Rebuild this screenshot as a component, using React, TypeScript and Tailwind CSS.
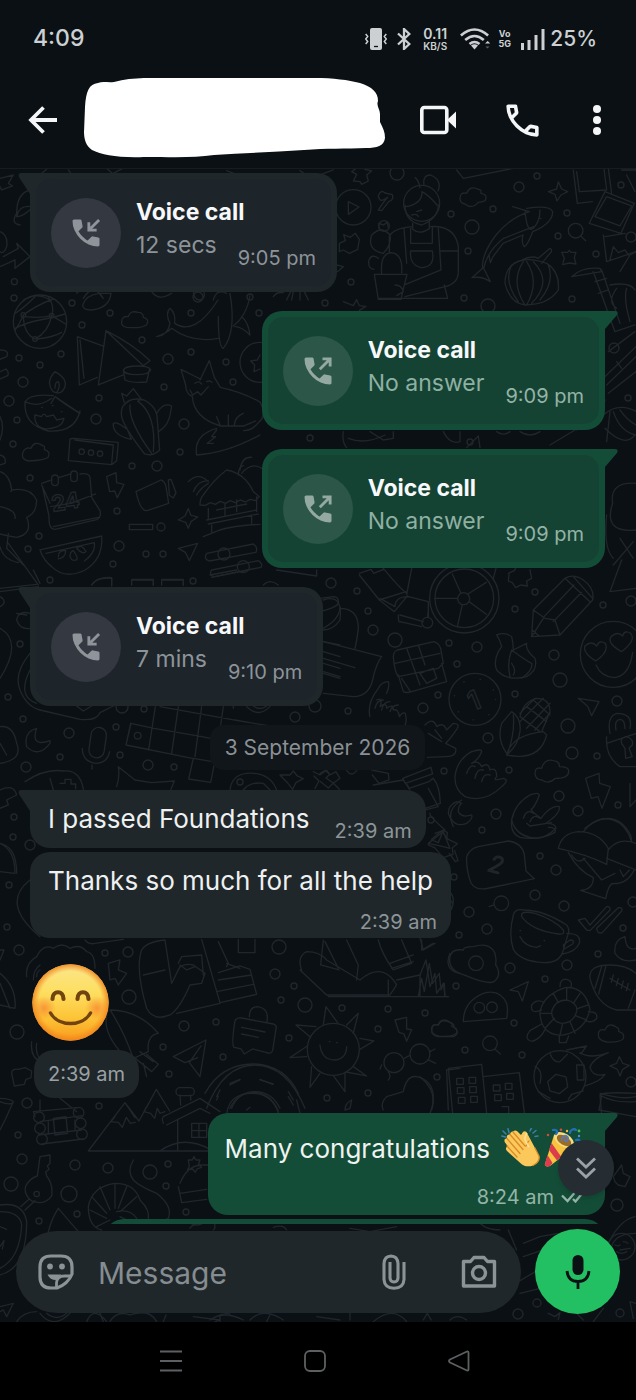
import type { ReactNode } from 'react';

type Dot = [number, number, number];

const DOTS: Dot[] = [
  [72, 303, 3], [110, 313, 3], [82, 325, 3], [142, 340, 3], [19, 358, 3], [61, 354, 3], [40, 365, 3], [23, 382, 5],
  [9, 401, 5], [168, 359, 5], [191, 352, 3], [226, 362, 3], [233, 382, 3], [164, 387, 3], [99, 398, 3], [96, 419, 5],
  [17, 420, 3], [184, 424, 5], [13, 444, 3], [132, 466, 3], [157, 466, 5], [180, 452, 3], [30, 478, 3], [117, 511, 3],
  [161, 527, 4], [39, 536, 3], [28, 549, 3], [119, 546, 5], [146, 554, 3], [163, 554, 3], [113, 564, 3], [50, 580, 3],
  [198, 297, 5], [191, 313, 3], [259, 313, 3], [519, 187, 5], [537, 176, 3], [493, 209, 3], [451, 214, 3], [472, 227, 7],
  [567, 213, 3], [621, 185, 3], [558, 236, 3], [596, 254, 3], [468, 251, 3], [351, 282, 3], [464, 298, 3], [488, 306, 7],
  [572, 299, 3], [397, 173, 7], [614, 348, 5], [628, 398, 3], [631, 237, 5], [325, 303, 3], [331, 583, 5], [357, 591, 3],
  [368, 611, 3], [373, 630, 5], [395, 640, 7], [449, 643, 3], [477, 647, 5], [457, 664, 3], [515, 609, 3], [535, 592, 3],
  [554, 655, 5], [560, 680, 7], [603, 605, 3], [631, 601, 5], [438, 695, 3], [423, 708, 5], [515, 694, 3], [488, 738, 5],
  [568, 726, 7], [572, 753, 6], [597, 756, 3], [617, 701, 5], [444, 771, 3], [509, 770, 3], [559, 796, 5], [578, 811, 5],
  [618, 805, 3], [496, 814, 5], [431, 820, 3], [482, 830, 3], [348, 711, 3], [193, 581, 3], [20, 644, 3], [8, 697, 3],
  [23, 719, 3], [69, 733, 5], [116, 727, 3], [60, 757, 3], [26, 767, 5], [120, 755, 3], [148, 765, 5], [174, 767, 3],
  [144, 709, 3], [122, 707, 6], [295, 717, 5], [315, 706, 6], [14, 817, 3], [13, 837, 3], [30, 845, 5], [240, 782, 3],
  [9, 885, 3], [7, 927, 3], [19, 950, 5], [105, 953, 3], [128, 952, 5], [129, 997, 7], [279, 947, 7], [275, 974, 5],
  [294, 986, 3], [281, 1000, 3], [305, 1005, 7], [342, 1008, 3], [388, 1009, 3], [425, 1013, 3], [378, 1029, 3],
  [289, 1038, 3], [184, 1026, 5], [216, 1022, 3], [163, 1047, 3], [223, 1057, 3], [169, 1074, 3], [17, 1032, 7],
  [327, 1098, 3], [368, 1093, 3], [437, 1077, 3], [540, 856, 3], [556, 870, 5], [454, 877, 3], [535, 895, 5],
  [564, 906, 5], [469, 912, 5], [487, 929, 5], [459, 935, 3], [623, 928, 3], [598, 954, 3], [567, 965, 5], [510, 968, 5],
  [545, 979, 3], [456, 986, 3], [514, 1023, 3], [465, 1050, 3], [522, 1055, 3], [631, 1082, 5], [633, 902, 5],
  [27, 1103, 5], [99, 1106, 3], [18, 1135, 3], [22, 1159, 5], [11, 1184, 7], [75, 1165, 5], [108, 1168, 5], [69, 1194, 8],
  [77, 1214, 3], [39, 1221, 3], [150, 1172, 7], [168, 1164, 3], [166, 1186, 3], [186, 1212, 3], [617, 1205, 6],
  [518, 1314, 5], [537, 1303, 4], [620, 1313, 4], [14, 298, 3], [250, 297, 3], [470, 442, 3], [310, 438, 3],
];

function Wallpaper() {
  return (
    <svg
      aria-hidden="true"
      className="pointer-events-none absolute inset-0 h-full w-full"
      viewBox="0 169 636 1153"
      preserveAspectRatio="xMidYMin slice"
      fill="none"
      stroke="#20262b"
      strokeWidth="1.4"
      strokeLinecap="round"
      strokeLinejoin="round"
    >
      {DOTS.map(([x, y, r]) => (
        <circle key={`${x}-${y}`} cx={x} cy={y} r={r} />
      ))}

      {/* left edge beside the first call */}
      <g transform="translate(0 0) scale(.3333)" strokeWidth="4">
        <path d="M0 535 40 525 25 550 38 558 5 570 0 560M50 640q0-60 40-70M50 640q-20 30 10 35M95 620q-40-5-45 30 20 0 45-25M0 695q25 10 20 45-10 25-20 15M10 770l45-25-5-15 40 40-45 35v-25l-45 20M125 520l15-12M205 510l10 14M320 505l20 18M340 520l30-16M680 512l25 10M900 512l15 10M960 525l40-15" />
        <circle cx="43" cy="845" r="9" />
        <path d="M70 900q40-25 80 0M230 880l20-18M250 895q30-50 60 0M290 870l15 20M455 875q20 30 60 5M580 870q0 30 20 30 20-5 10-30M640 900q10-35 40-20M860 900l12-25M875 900l5-25M900 900v-25M925 900l-12-25M820 890q10-15 30-12" />
      </g>

      {/* globe, samosas, lamp, cactus, fox, calendar, hut */}
      <g transform="translate(0 290) scale(.3333)" strokeWidth="4">
        <circle cx="120" cy="95" r="80" />
        <path d="M45 70Q70 55 105 20M70 75q40-30 90-48M70 75q0 55 35 72M155 77q-10 50-50 70M155 77q10-30-10-55M45 120q12-15 25-45M75 80q50 5 80-3M110 147q50-5 75-20M45 115q40-20 75-25t75-18M155 77l42 25" />
        <circle cx="70" cy="75" r="7" /><circle cx="155" cy="77" r="7" /><circle cx="105" cy="147" r="7" />
        <path d="M248 45q10-30 50-35h35q-5 45-60 50-25 0-25-15ZM365 95q0-18 20-15 5-20 30-13 15 0 15 15 20 5 10 22-15 12-60 8-18-3-15-17ZM470 140q35-5 40-40-15-30 0-45 18 15 14 45 60 40 130-70M470 140q30-10 45-25 60 45 140 30M655 80q0 90 15 95 40-50 20-165M700 108q40-30 50-90M705 110q20 0 45 25-5-40-25-55" />
        <path d="M232 140 238 285 292 262M232 140l76 28M240 150l12 115M318 122 295 285 370 255M318 122q80 40 132 90l-20 15-112-105M370 240q5-12 42-12t40 12q-5 14-42 14t-40-14l5 30q20 10 65 6l8-36" />
        <path d="M160 305q-25-30 5-60 45 25 25 55-10 15-30 5M165 295q0-20 10-20 8 15-5 32M75 335q15-25 85-18M165 320l75 50q-35-20-75-50l-12 20M75 335q40 20 80-10M75 335q-5 70 70 88 80 5 95-60M105 375l20 5q5-15 15 0l20-5 10 15 22-5q-5 20-20 25-40 15-60-5-10-15-7-30ZM125 352h2M157 347h2M184 365h2" />
        <path d="M365 310l15 8 20-22 15 20 8 10-10 8M365 310l8 28M372 345q20-25 60-15 40 20 40 60l7 90q-20 20-45 12-70-90-70-120 0-20 8-27ZM390 345q-5 50 65 145M415 335q55 40 45 150M340 400q10-5 30 10l12 8 12 30q-50-10-54-40ZM470 370q20-35 45-22l-3 18q-5 40-35 58" />
        <path d="M220 445l135 12-5 55-15 12-130-12 5-65 10-2ZM225 450l115 15-5 58M68 490q5-20 25-15 10-25 35-8 8 0 5 12 20 5 12 22-10 10-60 12-22-5-17-23Z" />
        <circle cx="245" cy="485" r="8" /><circle cx="273" cy="488" r="8" /><circle cx="300" cy="491" r="8" />
        <path d="M557 285 543 238l40 20 20 10M600 270l28-58 15 50 18 30q70 15 120 45 20 40-5 60-20 25-45 25M557 285q0 25 20 35 5 65 85 88h70l35-15M570 300l8 15 15-10 10 10 22-25M590 495q-10-60 60-80M590 495q90-5 190-60M650 420l-15 20h12l-25 20h18M650 380l10 25M685 375v30M730 370q-25 10-27 35M585 280q10-10 20 2M620 275q10-5 16 2" />
        <circle cx="780" cy="217" r="60" /><path d="M780 195l-8 15-20 3 12 12-2 20 18-8" />
        <path d="M125 580l30-10M178 562l35-10M240 552q25-5 30 10l5 60 25 40q5 20-10 27L165 718q-20 0-18-40l-20-90M152 650l60-10 75-28M160 710l135-28M125 585l25 55" />
        <rect x="155" y="555" width="20" height="32" rx="10" /><rect x="212" y="543" width="20" height="32" rx="10" />
        <text x="158" y="665" fontSize="66" fontFamily="Inter, sans-serif" fontWeight="700" transform="rotate(-9 158 665)">24</text>
        <path d="M320 560l28-12 2 30 22 5-20 40-8-20-15 2-9-45ZM408 605l75-35q12 5 15 20l8 50-65 22q-20 3-33-57ZM505 570l8-2 15 40-8 16-12-8ZM535 690l20-12 10-22 8 20 20 5-20 14-8 20-8-18ZM388 703h70v16h-70z" />
        <path d="M600 645q0-20 10-30 30-45 70-75 55 10 80 65l18 15-12 12-15-4-15 8-15-6-15 8-15-6-15 8-15-6-15 9-15-5-15 8ZM565 575q30-30 60 0M580 605q15-35 45-32M590 615q10-20 35-35M720 540q5-40 35-38M725 550q30-35 60-15M715 555q0-25 15-28M625 655v30M770 620v45M620 690l150-30M625 702l150-30M635 705v22M755 675v25M610 740l30-12M640 728q40-20 140-25M675 640v35M710 630v35M650 660l90-18" />
        <path d="M120 780l185-42q5 70-50 102-60 30-100-10-25-20-35-50ZM138 790l145-32q5 30-30 55M175 800q0-20 22-18 0 20-22 25M210 800q0-15 10-18 15 20 10 28-15 5-20-10M230 775q15-15 28 10-10 10-28-10M535 775l58-15-25 52-12-25ZM620 790l140-28q15 10 8 25l-140 26q-18-5-8-23ZM635 840l140-28q15 10 8 20l-140 28q-18-5-8-20Z" />
        <circle cx="672" cy="792" r="18" /><circle cx="730" cy="830" r="18" />
        <path d="M0 545q30 10 35 55-5 10 0 0 55-10 75 30 0 40-30 52 20 50-30 60-30-5-50-10M0 650q50 10 45 35M25 730l-5 45 50 50M0 770q10 40 55 48M25 760l90 125M0 895l110-12M275 885q15-25 60-22v25M395 868h65v18M485 868h65v18M0 380q15 30 0 70M0 495q20 5 15 25l-15 5M0 180q30 0 20 20l-20 8M0 245l18-8q10 10 5 20l-23 10" />
      </g>

      {/* play button, gardener, koi, pumpkin, photos */}
      <g transform="translate(320 165) scale(.3333)" strokeWidth="4">
        <circle cx="100" cy="127" r="53" />
        <path d="M85 110v38l32-22ZM95 20l15 8-10 20 20 2 5 8 20-10-5-18 15-12-20-5-10-12-15 8ZM175 135q20-30 28-38-25 20-28-5 8-20 20-8l22 5q5 15-10 20l-22 28ZM410 15l20 25 150-30M58 235l18-8-5-18 20 8 15-12 12 18-5 30-25 12-18-10-12 5ZM50 300l20 5-18 15M70 410l30 12 10-18 8 18 20 2-20 12" />
        <circle cx="305" cy="115" r="54" /><path d="M300 68q-5-25-15-30M312 60q-5-30 20-30 35 15 22 48M258 125q50-10 48-45 20 10 45 40M275 150q15-5 20 4M290 140l15-5M255 120q0 50 50 60 50-20 50-60M278 175v18q20 18 50-2v-20" />
        <path d="M278 185q-60 5-70 30v45M330 185q75-5 85 60v75q0 35-40 45l-120 30M272 190v45h65v-50M252 190l8 105M355 190l8 125-110 45M272 258h65q10 50-35 50-35-10-30-50ZM363 258h50M163 328h98l-10 40-8 35h-68ZM185 328q-5-65 30-65 35 5 30 60M190 265q-50-10-35-55 30-30 55 0 5 30-20 55M175 400h208l-10-40M225 360q20 0 25 20l-20 12M178 195l-2-20 15 5 10-8 5 18M175 280q-20-15-28 5-5 25 15 28" />
        <circle cx="192" cy="183" r="16" />
        <path d="M420 100q0-20 20-15 10-25 35-12 10 0 8 12 22 3 12 22-10 5-20 5-20 22-40 5-15-2-15-17ZM578 125l50 15q-60 20-100 70-45 60-40 100l-32 28q30-5 55 12l-20-40q10-50 60-90l90-35M620 130q70-10 78 10 0 35-60 60-15 40-25 45-10-10-4-35l-60 25-30 40-8 18-4-25M615 135q5 70 25 55 20-20 20-55M660 160h3" />
        <path d="M610 285q-55 10-55 70 15 60 60 65 70 0 100-45 5-55-35-80-40-15-70-10ZM610 290q-40 60 5 130M620 290q40 60 0 130M640 290q60 60-5 125M575 300q-25 50 20 110M685 300q20 50-25 105M605 285q30-15 50-5l35-30q10 5 0 15l-25 30" />
        <path d="M685 80l25-8 5-22 10 22 18 8-20 10-12 18-6-20ZM725 262h18l5-6 5 6h15l-5 15 5 20-20-3-20 5 5-20ZM760 15l12 100 45-5M865 10l10 75M770 20l8 60 82-5-8-65M855 80 808 175l95 30 40-90ZM860 95l-35 60 75 28 35-60ZM850 210l10 80 88-30M855 215l60-10M870 285l10-40 15 18 20-8 10 15M755 335q30-30 85-25l5 10-90 15ZM820 320l65 180 60-20M845 315l55 160M825 350l35-10M835 385l30-10M890 370q-30 40 0 60M920 370q-10 30 10 100M870 360q60-10 75 15" />
        <circle cx="767" cy="197" r="22" /><path d="M782 213l15 14M850 640l98-95M860 660l88-85M865 685l83-65M890 590l15 20M865 560l80-60M850 750q45-40 100-10M870 740l-10 90M855 790q60 60 90 20M880 740q20 60 68 70M900 735q20 30 48 45M770 795q70-35 85-90M690 840l75-45M70 800q-5 30 10 48M85 820q50 20 110-10M150 800l40 25 30-5v-20M370 800q20 40 50 30v-30M440 848l35-35 5 35M530 800q20 15 40 0M600 800q30 20 60 0" />
        <path d="M905 15l43 0M920 30l25 50M900 320l30-50 18-10M948 955q-80-5-70 60-30 90 70 80M860 1050q-10 100 20 130M880 1200l60-70M900 1120l40 60" />
      </g>

      {/* bags and fruits under the outgoing calls, wheel, pencil, chest, coin, corn */}
      <g transform="translate(320 560) scale(.3333)" strokeWidth="4">
        <path d="M118 40l35-12 8 12 30-12M118 45l60 75 80-25M190 25q50 60 70 75M275 25l-15 78M178 120l45 35 40-48M180 115l45 25M225 140q0-30 40-30l60 15v45M235 165q0 25 5 20l65 15M240 165l70 20M325 150l-2 20" />
        <circle cx="322" cy="188" r="16" /><circle cx="433" cy="115" r="104" /><circle cx="433" cy="115" r="88" /><circle cx="431" cy="116" r="18" />
        <path d="M413 115h-68M423 100 397 42M444 102l55-35M447 125l52 38M427 134l-14 62M520 55l8-30M565 40l18-8 5-10M630 30l5 25-15 8 2 15-20-3-15 8-10-15-12-5 2-20M870 95l35-95M870 95l78-10M640 150 735 55q25-15 55 5 35 25 28 60L720 225l-85 5ZM640 150l35 25 30 5 15 45M672 170l90-95M700 185l85-88M735 55l75 70M760 50l58 65M637 210l20 18M635 230l35-55" />
        <circle cx="880" cy="283" r="99" />
        <path d="M827 303q-40-25-32-45 20-18 35 0 8-20 26-8 12 25-29 53ZM905 275q-45-25-32-45 20-18 35-2 5-20 24-8 18 20-27 55ZM828 315q15 35 55 38 45-5 55-75M0 155q60-15 55-30 0-15-15-15l-40 5M60 145q55 0 55 60-5 40-10 60M10 245l175 45q-15 20-25 60-10 60-60 60L10 400M10 295l95 28M10 335l50 15M0 210q60-30 60-70" />
        <path d="M220 290q0-15 12-20l110-25q15 5 20 20l8 45-15 15-120 25q-12-15-15-60ZM235 345l15 50q10 5 25 0l105-30-15-55M260 265l40 110M245 355l25 38M295 255l20 60M225 310l135-30M300 340l40-15 10 30-30 15ZM530 225q25-10 45 5 5 20 5 40l40-20q-5 20 25 45 10 35-25 55-60 15-90-20-10-25 5-55l10-15q-5-20-15-35ZM570 350q-10-40 5-80 40 30 60 40 5 20-30 45M575 310q15 20 5 35" />
        <circle cx="465" cy="418" r="78" /><circle cx="465" cy="418" r="62" strokeDasharray="1 50" />
        <text x="445" y="448" fontSize="80" fontFamily="Inter, sans-serif" fontWeight="600" transform="rotate(-22 465 420)">1</text>
        <path d="M150 470q-10-40 25-85 10-20 30-20 5 10-5 35M170 420q20-10 10 20 20-15 20 5 20-15 20 5 15-5 18 20 10-15 18-10 10 40-20 60-60 20-85-20M165 445q5-25 25-25M185 450q5-25 25-25M210 455q5-20 25-20M600 470q10-45 50-55 40 0 40 40l-25 60M600 470l60 45M620 440l60 45M640 420l50 45M690 430l-70 75M670 415l-70 70M645 415l-45 45M690 460l-45 50M560 580q-30-40-15-90l30-35q30 20 25 60-5 40-40 70 15-60 110-70l10 10q-20 80-120 60M565 575q20-60 15-110M775 415l62 10-22 42-12-28ZM860 550l90-30M860 530q-5 60 40 90h48M870 520q-10-50 20-60 50 0 40 45M888 510q-5-30 12-32 15 0 15 28M905 550q-5-15 12-20 25 5 20 25l-10 10 10 25-20 5-2-30ZM315 495q25-25 35 5 20-15 30 10l20-20q20 0 12 15-20 30-35 45l30 15q5 25-30 25l-55 2M325 520l40 25M345 510l20 25" />
        <path d="M405 650q5-50 50-75 30-10 30 0-10 25-30 35 20-10 30 10 20-15 25 10 20-10 20 20-15 15 20 5 20 5-5 25-50 50-110 30-30-20-30-55ZM440 640q10-30 25-20M465 655q5-30 25-25M485 665q5-25 25-20M575 780q10-50 55-75 25-10 28 0-10 30-25 45l10 10 20 15q30-40 55-35 5 20-40 50 30 0 30 15-30 30-60 30-60-5-73-55ZM610 775q10-30 30-15M630 785q10-25 30-10M645 640q0-20 20-15 10-35 45-20 10 5 8 15 30 0 28 15 0 20-40 20-20 20-40 5-20 0-21-20ZM797 655l40-15 2 30 32 10-25 65-12-35-20 5ZM930 670v70l18-20M248 655l85-33 5 20-82 28ZM262 675l5 10 60-20 12-10q20 20 22 75l-45 15M410 725q-25 10-25 35 15 45 55 30 20-15 15-25-30 10-40-10 0-20 10-25ZM155 630l50 10 2 20-30 10-20-25M0 640l15-8 15 10-12 12 22 15-15 15-25-20M80 632q15 20 30 0M335 838l30-25 20 25M795 805q60-50 110-15 30 30 30 50" />
      </g>

      {/* mic, crossword, controller, cat */}
      <g transform="translate(0 570) scale(.3333)" strokeWidth="4">
        <path d="M0 65l115-15M100 0l20 40M275 45q15-25 60-20v20M395 45v-15h65v15M485 45v-15h65v15M630 15l80-15M635 22l110-22M830 0l120 18v-18M790 45q20-20 45 0M0 80q25 15 0 30M50 130l30 5M90 130q-35-10-40 20 10 30 40 25M0 175q70 40 0 150M90 250q-50 60-30 110 20 50 60 60l120 28q50 5 60-20l40-20M90 300q-40 80 20 100M230 408l20 15 25-15M970 215l50 10M970 245l50 15M970 280l50 15M970 310l50 15M970 90q60-20 50 60-20 30-50 30" />
        <path d="M110 475q-40 10-30 55 35 35 70-10v-8q-40 15-45-10 0-15 5-27ZM0 470q40-5 50 50 20 50-50 60M0 520l20 35" />
        <rect x="270" y="472" width="46" height="92" rx="23" transform="rotate(8 293 518)" />
        <path d="M247 535q0 40 40 45 35 0 42-35M276 585v12M392 460l70 15 70 12 70 12 30 6M392 460l-14 65 188 38 72 12M466 410l-20 130M535 410l-20 140M605 410l-20 150M670 410l-10 70M480 410l250 45 75 12M378 525l15-65M580 565l-14 62 66 10 12-60M705 450l45 8M75 635q60-40 115-32 50-5 60 55M150 625l10 35M180 640h15v-12h18v14h14v14M350 650q10-30 5-60 25 20 50 40l50 8 68-5-10 25M690 660q5-45 50-50 70-5 90 50M730 660q20-25 60-20l20 20M840 615h30l10-12 12 15 18 8-22 12-10 20-14-18ZM940 605l20 10 20-15 10 15 18-10 12 20-20 15 18 18M945 655l12-22-15-15M740 410q35 35 70 0M760 408q20 15 40 0M700 400v15" />
        <circle cx="413" cy="497" r="10" />
        <path d="M0 660q40-20 50 15l-30 15 5 15-25 10M0 820q50 10 50 90" />
      </g>

      {/* middle band: backpack, hiking, sun, envelope bubble, moon, glasses */}
      <g transform="translate(0 780) scale(.3333)" strokeWidth="4">
        <path d="M90 300q-90 70 30 170M0 190q45 20 45 90l-45-5M0 510h12l-12 30M0 580q50 40 45 105l-45-10M0 610l30 75M255 480q10 15 30 10l85-12M80 590q-5-40 30-60 20-40 50-25 25-20 50 0 30-15 50 10 25 5 25 50M100 600q0-30 20-45M110 590q0-15 10-20M325 550l35-10-5 30 25 10-25 35-10-20-15 5ZM425 510q15-25 70-30l20 130 25-50q20-10 40-5l35 25-10 30-35 5q-30 70-60 90-50 20-70-20-35-120-15-175ZM430 585l65-15M530 700l130-30M605 478l55 190M660 668l110-25-20-75-30-10-65 20M535 550l10-20 60-5 5 60M540 555l20 15 25-10M655 485l30 65-5 10M680 550l40 15M655 600l100-15M650 635l110-22M715 478v40h50v-40M330 690q40 60 70 145l45-20q-5-50 30-55-60-70-145-70ZM325 690q-30 70 70 160M400 830l55 45 20-22-35-30M420 815l40 30M430 850l10 40" />
        <path d="M705 722q5-10 20-8l95 18q12 5 8 15l-10 65q-5 12-20 5l-40-10-25 15-10-15-20-5q-10-5 2-80ZM725 742l70 14M725 762l50 10M748 710q0-30 25-30 35 5 28 45" />
        <path d="M520 830l98-50-18 110-32-42 35-50M520 830l35 18 38-15" />
        <circle cx="1000" cy="808" r="78" />
        <path d="M960 795q5 45 45 45 35-5 35-40M988 785h2M1010 788h2M970 735l8-55 35 48M1040 735l35-35-15 60M1080 775l42 8-42 25M1060 860l40 28-62-12M1035 880v55l-35-48M960 880l-30 42 5-62M920 830l-50 3 52-35M930 770l-42-35 60 5" />
        <circle cx="1182" cy="848" r="30" /><circle cx="1260" cy="822" r="30" /><path d="M1213 835l15-8M1145 855l-5 12M1165 875q10 15 0 25M1290 815l15-8M1285 840l22 10M1185 720l35-8v35l15 2-15 35-8-22-15-5ZM1295 750q0-20 20-15 5-20 35-8 15 5 12 15 20 15 0 28h-50q-20-5-17-20Z" />
        <path d="M905 570q-15-40 15-55 40 0 60 25l100 60q60-50 100 0l10 15-20 30h-190l-80-75ZM970 480l-8 75 55 15M975 485l40 80M1040 480l35 75-5 45M1135 480q10 40 45 90l55-20-30-70M1170 550l70-25M1175 565l65-20M985 650h360M1165 600v50M1190 600l70-15v65M1255 650l10-55 8 40 15-85 10 60 20-30 5 50 10-20 2 40M1265 480v30l35-20M1350 520q-20 50 30 60M1345 355q30 20-10 55" />
        <path d="M620 985q50-130 145-130 95 0 150 130M695 985q20-50 70-50 50 0 75 50M690 915l30-15M780 900l40 12M650 950l10-20M880 960l-15-25M1150 990q-10-20 10-40l50-15q10-50 40-45 45 10 50 55 0 25-5 45M1345 990l-5-120 40-5M1290 100q-5 5 45 50l-30 10M1285 190l45-35 20 50-20-5ZM1385 60q-50 30-25 80M1120 15l90-15 20 30M1285 25l30 55-60 15" />
      </g>

      {/* right band: pin, mug, trees, toast, turtle, football, towers */}
      <g transform="translate(420 820) scale(.3333)" strokeWidth="4">
        <path d="M25 75l10-15 20 8 15-38 12 8-2 18 32 15-15 12 2 20-30 10-25-30ZM88 100l18 25 8-3-10-30M275 0q-5 40 25 52 60 10 105-15 5-15-20-15M320 10l10 8 65-10M140 110q10-25 35-30l90-17q40 5 48 40l5 50 25 23-135 28q-40 10-55-15-15-40-13-79ZM415 85q10-45 60-50 60 0 90 50l-5 48q-60-30-145-48ZM490 35q40-50 90-35 40 15 55 65M565 90q30-40 83-20M560 115l88 35M445 98q30 55 75 75 0 35-38 38l75 25q10-50 25-45 40 0 60-40M490 115l55 65 40-20M600 150l10 20 18-20M455 105q20 30 40 10" />
        <text x="205" y="158" fontSize="70" fontFamily="Inter, sans-serif" fontWeight="300" fontStyle="italic" transform="rotate(15 225 140)">2</text>
        <path d="M280 285q5-20 30-15 60 0 130 45 10 15 5 25l-15 50q-10 40-60 38-70-5-90-40-15-45 0-103ZM305 290q-5-20 40-10 60 20 85 50 5 15-15 12-80-10-110-52ZM440 340q45 0 38 30-10 25-50 32M430 375l20-15q15 0 8 12l-25 15ZM300 350q15 30 50 32l12-5M300 332h2M372 362h2M475 300l20-5 15 20 50-55q12-2 10 10l-60 62-10-2ZM530 325l65-62q15-2 10 10l-58 65q-15 5-17-13ZM615 350q-35 10-30 50 20 30 63 20M648 385q-30 10-33-35" />
        <circle cx="244" cy="250" r="22" /><path d="M222 255l-15 5M85 210q30 30 0 70M0 355l10 35 35-20M90 410q5-25 40-20 0-10 30-10 50-15 65 20 5 20 2 35 20 30-5 50-20 10-90-20-50-15-42-55Z" /><circle cx="168" cy="430" r="22" />
        <path d="M130 605q0-60 60-85 50-15 70 30 5 20 0 45ZM270 510l55-25-18 58-12-28Z" /><circle cx="178" cy="563" r="16" /><circle cx="216" cy="562" r="16" />
        <path d="M360 575q10-50 75-72 60-5 75 65-15 70-90 78-60-5-60-71ZM395 575q10-35 45-35 35 10 30 35-10 35-45 35-30-5-30-35ZM440 503v38M400 520l15 28M480 520l-20 30M505 555l-35 12M500 600l-32-12M465 640l-15-35M420 645l8-35M375 625l28-30M362 580h32M420 500q0-25 20-22 20 5 12 25M365 570q-35 15-30-15 15-20 38-8M365 612l-35 20q-20 25 5 32 25-5 40-35M505 575q30 0 25 20-10 15-35 8M418 648v20h20l8-20" />
        <path d="M510 475q-5-40 60-40 50 0 78 25M510 475q20 80 80 95h58M545 440l-20 65M558 437l-22 85M625 565l20-55M570 475l60 35M580 465l-6 22M595 475l-6 22M610 483l-6 22M625 490l-6 22" />
        <path d="M35 630q0-20 20-15 10-25 35-8 10 5 5 12 20 5 15 20-10 12-50 10-25-5-25-19ZM535 645q0-20 20-15 10-25 35-8 10 5 5 12 20 5 15 22-10 12-50 10-25-5-25-21ZM570 738l20-8 8-20 10 20 20 6-20 12-8 20-8-20Z" />
        <circle cx="210" cy="670" r="22" /><path d="M225 688l16 14" />
        <circle cx="420" cy="770" r="78" />
        <path d="M383 785l25-22 30 8 5 30-25 20-28-8ZM390 700q10 30 30 25l22-22M345 740q25 10 15 50M355 815l35 20M470 735h22v45h-20ZM445 838l10-15 35-10M440 690l60-12q-20 30-20 20 30 20 85 0-50 20-55 45 10 30 45 20-10 20-60 35" />
        <path d="M98 880 85 745l100-12 15 147M190 770l108-12 15 120M110 775h20v18h-20zM147 772h20v18h-20zM112 803h20v18h-20zM149 800h20v18h-20zM115 832h20v18h-20zM152 829h20v18h-20zM220 795h20v18h-20zM256 790h20v18h-20zM224 824h20v18h-20zM260 820h20v18h-20zM246 860h20v18M540 825q10-10 108-5M540 825l5 60M540 825q40 25 108 20M0 770q60 50 30 110M0 530h85M0 465l18-45 12 80 15-40 5 60 20-30 5 40" />
      </g>

      {/* mountains, cabin, key, shrimp, people */}
      <g transform="translate(0 1020) scale(.3333)" strokeWidth="4">
        <path d="M95 65q-5 50 30 60M110 70q-5 35 15 50M35 160q0-15 20-12l20-5 20 10-2 20-15 5-5 15-30 5ZM0 235q30 0 40 10l-25 55-15 30M0 245q25 10 35 5M120 240v30M180 235l50 40M105 290l-5-15 130-12M120 305l125-18M115 345l130-15M125 372l125-15M160 295l38-5 5 50-38 5ZM145 305v35M225 300v30" />
        <circle cx="117" cy="292" r="16" /><circle cx="120" cy="325" r="16" /><circle cx="126" cy="358" r="16" /><circle cx="236" cy="278" r="16" /><circle cx="242" cy="310" r="16" /><circle cx="246" cy="343" r="16" />
        <path d="M630 393H265l110-145 42 55 52-95 40 65M345 290l-12 15 22 2 12 15 12-30 12 18 15-3M375 248l30 45M440 260l-8 15 20 5 12 15 8-30 8 15 15-5M490 310q-10-20 10-25l100-50 60 40M500 315l100-50 30 15M533 300v90M480 393q70-50 150-5M575 310h45v42h-45zM597 310v42M575 332h45M540 225l2 30M572 225v15" />
        <rect x="528" y="203" width="55" height="24" rx="12" />
        <path d="M615 220q50-90 150-88 90 5 130 88M690 265q20-45 70-48 50 0 75 55M690 190l30-12M780 178l38 15M650 240l5-12M865 230l15 25M740 270l10-8" />
        <path d="M120 410l30-5v25l-8 8 5 10-10 8 3 12q20 25 15 60-20 30-60 15-25-20-18-45 15-25 35-30ZM75 570l30-28M62 560l25-22M0 555q70-10 80 50 0 140-80 160M0 575q60 0 65 40-5 100-65 130M0 620l20 8M0 680l12-18-5 25" /><circle cx="110" cy="522" r="8" />
        <path d="M145 635q10-40 30-70l60 70M265 560q10-60 80-70 60 0 75 50 30 30 25 55M265 560q0 60 40 70M300 500l30 70M275 530l45 50M345 490v75M380 500l-25 65M410 530l-50 45M270 570l50 25M290 620l40-20M350 575q40-10 60 20M360 590l40 20M400 420q-20 35 0 60 20 20 70 40 50 40 35 75-15 10-30 5M540 490q20-50 60-55h25M535 500l10 48 75-10M540 520l80-12M565 420h12l5-10 6 10h12l-5 14 10 8-14 5-5 10-8-10-15 2 5-10ZM560 600q30 30 60 0M640 600q10 25 0 30" />
        <path d="M0 860l40-10-20 40-10-20-10 5M50 905q20-30 60-30M120 880q40 50 90 0M140 880q30 25 60 0M260 905q20-50 60 0M300 880l10 25M330 905q20-35 60-20 60-20 80 20M490 905l8-20M580 890l80 10-20 8M660 905v-20q30-10 30 0M750 900q40-40 100 0" />
      </g>

      {/* lower right corner */}
      <g transform="translate(190 1090) scale(.3333)" strokeWidth="4">
        <path d="M110 70q10-60 75-60 60 0 80 58M320 30l10 40M485 30q-20 10-20 30l15-5ZM1230 10q70 20 108 10M1235 20l-8 40 110 20M1270 260l25-35 5 25 20 10-15 30-20-5-10-10ZM1245 480q40-90 90-100M1338 430q-70 0-75 50M1290 480l30-5M1050 440l55-10M955 420l25 60M1000 460l50-20M1000 500l60-20M985 575l60-35M990 610l60-15M1180 690l-20-20M1210 695l30-40M1075 670l20 10 15-12-5 20M1320 635l18 5M1320 635l10 50M870 400q20 20 60 20M480 415l60 10 80-15M250 412q30-10 40 8M20 400q-20 10-20 15" />
        <circle cx="1295" cy="470" r="40" /><path d="M1275 465q10 5 15 0M1300 455q10 0 14 5M1280 485q15 10 30 0" />
        <path d="M60 690q40-30 100 0M230 695l10-20M380 680l70 10M480 690v-20M550 695q60-50 100 0M700 690l12-20 12 20M780 690q20-20 50 0" />
      </g>
    </svg>
  );
}

const CALL_PATH =
  'M19.95 21q-3.125 0-6.175-1.362t-5.55-3.863-3.862-5.55T3 4.05q0-.45.3-.75t.75-.3H8.1q.35 0 .625.238t.325.562l.65 3.5q.05.4-.025.675T9.4 8.45L6.975 10.9q.5.925 1.187 1.787t1.513 1.663q.775.775 1.625 1.438T13.1 17l2.35-2.35q.225-.225.588-.337t.712-.063l3.45.7q.35.1.575.363T21 15.9v4.05q0 .45-.3.75t-.75.3Z';

function Tail({ side }: { side: 'in' | 'out' }) {
  return side === 'in' ? (
    <svg aria-hidden="true" viewBox="0 0 34 22" className="absolute top-0 -left-[12px] h-[22px] w-[34px] fill-[#1f272a]">
      <path d="M3 0h31v22H12v-1L1.500 5Q-1 0 3 0Z" />
    </svg>
  ) : (
    <svg aria-hidden="true" viewBox="0 0 34 22" className="absolute top-0 -right-[13px] h-[22px] w-[34px] fill-[#144d37]">
      <path d="M31 0H0v22h21v-4L33 4Q35 0 31 0Z" />
    </svg>
  );
}

function CallBubble({ side, detail, time }: { side: 'in' | 'out'; detail: string; time: string }) {
  const out = side === 'out';
  return (
    <article
      className={
        out
          ? 'relative mb-[19px] self-end rounded-[20px] bg-[#144d37] p-[6px]'
          : 'relative mb-[19px] self-start rounded-[20px] bg-[#1f272a] p-[6px]'
      }
    >
      <Tail side={side} />
      <div
        className={
          out
            ? 'relative flex items-center gap-[15px] rounded-[15px] bg-[#144334] px-[15px]'
            : 'relative flex items-center gap-[15px] rounded-[15px] bg-[#1d242a] px-[15px]'
        }
      >
        <button
          type="button"
          aria-label="Call back"
          className={
            out
              ? 'grid size-[70px] shrink-0 place-items-center rounded-full bg-[#2b5648] text-[#94a9a1]'
              : 'grid size-[70px] shrink-0 place-items-center rounded-full bg-[#343841] text-[#8f949a]'
          }
        >
          <svg aria-hidden="true" viewBox="0 0 24 24" className="size-[36px]">
            <path d={CALL_PATH} fill="currentColor" />
            <path
              d={out ? 'M13.200 10.800 20 4M15 3.900h5.100V9' : 'M20.700 3.300 14 10M13.900 4.900V10.100h5.200'}
              fill="none"
              stroke="currentColor"
              strokeWidth="1.900"
            />
          </svg>
        </button>
        <div className="flex flex-col pt-[17px] pb-[11px]">
          <h2 className="text-[23px] leading-[33px] font-bold text-[#f7f8fa]">Voice call</h2>
          <div className="flex items-start gap-[21px]">
            <p className={out ? 'text-[23px] leading-[33px] text-[#8fb0a2]' : 'text-[23px] leading-[33px] text-[#8d9499]'}>{detail}</p>
            <time className={out ? 'mt-[13px] text-[20px] leading-[33px] text-[#94b3a6]' : 'mt-[13px] text-[20px] leading-[33px] text-[#8d9499]'}>
              {time}
            </time>
          </div>
        </div>
      </div>
    </article>
  );
}

function IconButton({ label, children }: { label: string; children: ReactNode }) {
  return (
    <button type="button" aria-label={label} className="grid shrink-0 place-items-center">
      {children}
    </button>
  );
}

function SmileEmoji() {
  return (
    <svg role="img" aria-label="😊" viewBox="0 0 77 77" className="mt-[26px] ml-[2px] size-[77px]">
      <defs>
        <linearGradient id="face" x1="0" y1="0" x2="0" y2="1">
          <stop offset="0" stopColor="#fbe58c" />
          <stop offset=".35" stopColor="#fddf62" />
          <stop offset=".7" stopColor="#fdc437" />
          <stop offset="1" stopColor="#f99a1c" />
        </linearGradient>
        <radialGradient id="rim">
          <stop offset=".82" stopColor="#f58a1f" stopOpacity="0" />
          <stop offset="1" stopColor="#f0801c" stopOpacity=".85" />
        </radialGradient>
        <radialGradient id="cheek">
          <stop offset="0" stopColor="#f5722a" stopOpacity=".6" />
          <stop offset="1" stopColor="#f5722a" stopOpacity="0" />
        </radialGradient>
      </defs>
      <circle cx="38.500" cy="38.500" r="38.200" fill="url(#face)" />
      <circle cx="38.500" cy="38.500" r="38.200" fill="url(#rim)" />
      <ellipse cx="12" cy="44" rx="12" ry="12" fill="url(#cheek)" />
      <ellipse cx="65" cy="44" rx="12" ry="12" fill="url(#cheek)" />
      <g fill="none" strokeLinecap="round" stroke="#714310">
        <path d="M20.500 35c0-9 11-9 11 0M45.500 35c0-9 11-9 11 0" strokeWidth="4.200" />
        <path d="M18.500 49c8 14 32 14 40 0" strokeWidth="3.400" />
      </g>
    </svg>
  );
}

function ClapEmoji() {
  return (
    <svg role="img" aria-label="👏" viewBox="0 0 40 40" className="size-[40px]">
      <g stroke="#3d7fae" strokeWidth="1.500" strokeLinecap="round">
        <path d="M2 3l3 3M7 .8l1 4M.8 8l3.500 1M29 3l1.500-3M32 5l3-2.500M34 8.500l3-.5" />
      </g>
      <path
        d="M12 3.500c2-2 4-1 5 .5l3 3 2-3c1.500-1.500 3.500-.5 4 1l8 15 4 8c1 4-2 8-6 9.500-4 1.500-8 1-11-1L6 23c-2-2-1-4 1-4.500l-3-4C2.500 12 4 10 6 10.500c-1-3 1-4.500 3-4 0-1.500 1-3 3-3Z"
        fill="#fbc95b"
      />
      <path d="M9 6.500l13 15M6 10.500l13 15M6 18l10 11M12 4l12 14c2 1 2-4 4-5M34 20l4 8c1 4-2 8-6 9.500" fill="none" stroke="#d98a25" strokeWidth="1.300" strokeLinecap="round" />
      <path d="M26 5c-2 3-3 6-1 9l3 5" fill="none" stroke="#fbe29a" strokeWidth="1.500" />
    </svg>
  );
}

function PartyEmoji() {
  return (
    <svg role="img" aria-label="🎉" viewBox="0 0 40 40" className="size-[40px]">
      <path d="M2 36 11 7c5-3 20 6 19 13L7 38c-3 1-6 0-5-2Z" fill="#f8c33f" />
      <path d="M8.500 15 18 28.500l-4 4L6 22ZM4.500 27l5 8L7 38c-3 1-6 0-5-2Z" fill="#dd3c4c" />
      <ellipse cx="21" cy="12" rx="11" ry="6.500" transform="rotate(32 21 12)" fill="#f7dc83" />
      <ellipse cx="21" cy="12.500" rx="8" ry="4.500" transform="rotate(32 21 12.500)" fill="#9a6c24" />
      <path d="M19 13c-1-5 5-7 6-3s-4 4-3 1" fill="none" stroke="#5779b8" strokeWidth="2" />
      <path d="M10 2c4-1 5 2 3 4M27 5c0-3 4-5 6-3M33 12c3-1 5 1 5 4" fill="none" stroke="#246ec0" strokeWidth="2.200" strokeLinecap="round" />
      <circle cx="18" cy="1.800" r="1.300" fill="#e2463c" /><circle cx="24" cy="3" r="1.200" fill="#f5bc3d" /><circle cx="36" cy="3" r="1.400" fill="#42c04b" /><circle cx="5" cy="7" r="1.200" fill="#e2463c" /><circle cx="36" cy="8" r="1.200" fill="#4597dd" />
    </svg>
  );
}

function StatusBar() {
  return (
    <div className="flex h-[77px] items-center justify-between pr-[39px] pl-[33px] text-[#cdd0d2]">
      <time className="text-[23px] font-medium">4:09</time>
      <div className="flex items-center">
        <svg aria-label="Vibrate" role="img" viewBox="0 0 22 22" className="h-[22px] w-[22px]">
          <path d="M7 0h8q2 0 2 2v18q0 2-2 2H7q-2 0-2-2V2q0-2 2-2Z" fill="currentColor" />
          <path d="M9 18.500h4" stroke="#0b1014" strokeWidth="1.300" />
          <path d="M.7 6l2 2.500-2 2.500 2 2.500-2 2.500M21.300 6l-2 2.500 2 2.500-2 2.500 2 2.500" stroke="currentColor" strokeWidth="1.500" fill="none" />
        </svg>
        <svg aria-label="Bluetooth" role="img" viewBox="0 0 14 22" className="ml-[10px] h-[22px] w-[14px]" fill="none" stroke="currentColor" strokeWidth="2.300">
          <path d="M1 5.500 12.300 16 7 21V1l5.300 5L1 16.500" />
        </svg>
        <div className="ml-[10px] flex w-[28px] flex-col items-center font-semibold">
          <span className="text-[14px] leading-[14px]">0.11</span>
          <span className="text-[10px] leading-[10px]">KB/S</span>
        </div>
        <svg aria-label="Wi-Fi" role="img" viewBox="0 0 30 22" className="ml-[11px] h-[22px] w-[30px]">
          <g fill="none" stroke="currentColor" strokeWidth="2.600">
            <path d="M.9 7.500Q14.500-4.500 28.100 7.500M5.200 12Q14.500 4 23.800 12M9.500 16Q14.500 12 19.500 16" />
          </g>
          <path d="M11 17.500q3.500-2.500 7 0L14.500 21.500ZM25 15.500l2.700-2.600 2.500 2.600Z" fill="currentColor" />
          <path d="M25.500 18.500h4l-2 2Z" fill="#5a5f63" />
        </svg>
        <div className="ml-[8px] flex w-[13px] flex-col items-center text-[9px] leading-[10px] font-bold">
          <span>Vo</span>
          <span>5G</span>
        </div>
        <svg aria-label="Signal" role="img" viewBox="0 0 24 22" className="ml-[10px] h-[22px] w-[24px]" fill="currentColor">
          <path d="M0 15h3v7H0zM6.500 12h3v10h-3zM13.500 7h3v15h-3zM20.500 1h3v21h-3z" />
        </svg>
        <span className="ml-[5px] text-[21px] font-medium">25%</span>
      </div>
    </div>
  );
}

function ChatHeader() {
  return (
    <header className="flex h-[92px] items-center border-b border-[#161c20] pr-[33px] pb-[5px] pl-[28px] text-[#f5f6f7]">
      <IconButton label="Back">
        <svg viewBox="0 0 30 28" className="h-[28px] w-[30px]" fill="none" stroke="currentColor" strokeWidth="3.800">
          <path d="M29 14H3M15.500 1.500 3 14l12.500 12.500" />
        </svg>
      </IconButton>
      <button type="button" aria-label="Contact info" className="ml-[26px] min-w-0">
        <svg viewBox="0 0 302 82" className="mb-[4px] h-[82px] w-[302px] max-w-full" fill="#fff">
          <path d="M1 30C2 14 5 7 14 6c5-2 10 0 16-1C40 2 50 1.500 60 1h170c20 0 34 2 46 5 12 4 18 9 18 18-2 5 2 8 2 13v8c3 6 5 10 5 16-1 8-8 10-19 10-20 1-40 0-62 2-30 2-60 3-90 5-20 3-40 2-70 2-25 1-42-2-52-7-6-4-8-11-8-18Z" />
        </svg>
      </button>
      <div className="ml-auto flex items-center">
        <IconButton label="Video call">
          <svg viewBox="0 0 36 30" className="h-[30px] w-[36px]">
            <rect x="1.800" y="2.500" width="25" height="25" rx="2.500" fill="none" stroke="currentColor" strokeWidth="3.600" />
            <path d="M27 15 36 6.500v17Z" fill="currentColor" />
          </svg>
        </IconButton>
        <span className="w-[45px]" />
        <IconButton label="Call">
          <svg viewBox="0 0 24 24" className="size-[43px]" fill="currentColor">
            <path
              fillRule="evenodd"
              d={`${CALL_PATH}M6.025 9l1.650-1.650L7.250 5H5.025q.125 1.025.350 2.025T6.025 9m8.950 8.950q.975.425 1.988.675T19 18.950v-2.200l-2.350-.475z`}
            />
          </svg>
        </IconButton>
        <span className="w-[47px]" />
        <IconButton label="More options">
          <svg viewBox="0 0 12 30" className="h-[30px] w-[12px]" fill="currentColor">
            <circle cx="6" cy="4" r="4" /><circle cx="6" cy="15" r="4" /><circle cx="6" cy="26" r="4" />
          </svg>
        </IconButton>
      </div>
    </header>
  );
}

function Composer() {
  return (
    <form className="relative flex items-center gap-[14px] px-[16px] pt-[5px] pb-[8px]" onSubmit={(e) => e.preventDefault()}>
      <div className="flex h-[82px] min-w-0 flex-1 items-center rounded-full bg-[#1f272a] pr-[24px] pl-[22px] text-[#8b9397]">
        <IconButton label="Stickers">
          <svg viewBox="0 0 36 36" className="size-[36px]" fill="none" stroke="currentColor" strokeWidth="3.200" strokeLinejoin="round">
            <path d="M19 34h-6Q2 34 2 23V13Q2 2 13 2h10q11 0 11 11v7Q30 30 19 34Z" />
            <path d="M18.500 34v-5q0-7 8-7h7" strokeWidth="2.800" />
            <path d="M9.500 20.500h14q-4 2-5.500 5.500-6 0-8.500-5.500Z" fill="currentColor" stroke="none" />
            <circle cx="12" cy="12.500" r="2.900" fill="currentColor" stroke="none" />
            <circle cx="24" cy="12.500" r="2.900" fill="currentColor" stroke="none" />
          </svg>
        </IconButton>
        <input
          type="text"
          aria-label="Message"
          placeholder="Message"
          className="ml-[24px] min-w-0 flex-1 bg-transparent pt-1 text-[30px] text-[#e8eaec] outline-none placeholder:text-[#858d91]"
        />
        <IconButton label="Attach">
          <svg viewBox="0 0 24 36" className="h-[36px] w-[24px]" fill="none" stroke="currentColor" strokeWidth="3.100" strokeLinecap="butt">
            <path d="M22 8v17.500Q21.500 34 12 34.300 2.500 34 2 25.500V9.500Q2.500 2.200 9 2q6.500.2 7 7.500V24q-.3 4-4 4t-4-4V8" />
          </svg>
        </IconButton>
        <span className="w-[55px]" />
        <IconButton label="Camera">
          <svg viewBox="0 0 36 34" className="h-[34px] w-[36px]" fill="none" stroke="currentColor" strokeWidth="3.400" strokeLinejoin="round">
            <path d="M2.500 6.500h7L13 2.500h10l3.500 4h7v24.500h-31Z" />
            <circle cx="18" cy="18" r="6.500" />
          </svg>
        </IconButton>
      </div>
      <button type="button" aria-label="Record voice message" className="grid size-[85px] shrink-0 place-items-center rounded-full bg-[#22c063] text-[#0b1014]">
        <svg viewBox="0 0 26 36" className="h-[36px] w-[26px]">
          <rect x="7.500" y="1" width="11" height="20" rx="5.500" fill="currentColor" />
          <path d="M2 17q1 10.500 11 10.500T24 17M13 27.500V35" fill="none" stroke="currentColor" strokeWidth="2.800" />
        </svg>
      </button>
    </form>
  );
}

function SystemNav() {
  return (
    <nav className="flex h-[78px] items-center justify-center gap-[120px] bg-black pr-[6px] text-[#5d6062]">
      <IconButton label="Recent apps">
        <svg viewBox="0 0 24 24" className="size-[24px]" stroke="currentColor" strokeWidth="1.800">
          <path d="M1 2.500h22M1 12h22M1 21.500h22" />
        </svg>
      </IconButton>
      <IconButton label="Home">
        <svg viewBox="0 0 24 24" className="size-[24px]" fill="none" stroke="currentColor" strokeWidth="1.800">
          <rect x="2" y="2" width="20" height="20" rx="5" />
        </svg>
      </IconButton>
      <IconButton label="Go back">
        <svg viewBox="0 0 24 24" className="size-[24px]" fill="none" stroke="currentColor" strokeWidth="1.800" strokeLinejoin="round">
          <path d="M20 2.500q1.500-.5 1.500 1.500v16q0 2-1.500 1.500L3 13.500q-2-1.500 0-3Z" />
        </svg>
      </IconButton>
    </nav>
  );
}

export default function App() {
  return (
    <div className="flex min-h-screen flex-col bg-[#0b1014] font-['Inter','Liberation_Sans',sans-serif]">
      <StatusBar />
      <ChatHeader />
      <main className="relative flex flex-1 flex-col overflow-hidden">
        <Wallpaper />
        <section aria-label="Messages" className="relative flex flex-1 flex-col overflow-hidden pt-[4px] pr-[31px] pl-[30px]">
          <CallBubble side="in" detail="12 secs" time="9:05 pm" />
          <CallBubble side="out" detail="No answer" time="9:09 pm" />
          <CallBubble side="out" detail="No answer" time="9:09 pm" />
          <CallBubble side="in" detail="7 mins" time="9:10 pm" />

          <p className="self-center rounded-[14px] bg-[#10161a] px-[15px] text-[21px] leading-[45px] text-[#8a9094]">3 September 2026</p>

          <article className="relative mt-[20px] flex gap-[25px] self-start rounded-[20px] bg-[#1f272a] pt-[11px] pr-[14px] pb-[4px] pl-[18px]">
            <Tail side="in" />
            <p className="relative text-[26px] leading-[36px] text-[#eef0f1]">I passed Foundations</p>
            <time className="mt-[17px] text-[20px] leading-[26px] text-[#8d9599]">2:39 am</time>
          </article>

          <article className="mt-[4px] flex flex-col self-start rounded-[20px] bg-[#1f272a] pt-[11px] pr-[14px] pb-[3px] pl-[18px]">
            <p className="pr-[4px] text-[26px] leading-[36px] text-[#eef0f1]">Thanks so much for all the help</p>
            <time className="mt-[10px] self-end text-[20px] leading-[26px] text-[#8d9599]">2:39 am</time>
          </article>

          <SmileEmoji />
          <time className="mt-[9px] ml-[4px] self-start rounded-[20px] bg-[#1f272a] px-[14px] text-[20px] leading-[48px] text-[#9aa1a5]">2:39 am</time>

          <article className="relative mt-[15px] flex flex-col self-end rounded-[20px] bg-[#144d37] pt-[10px] pr-[22px] pb-[5px] pl-[17px]">
            <Tail side="out" />
            <p className="relative flex h-[50px] items-center text-[26px] text-[#eef3f0]">
              Many congratulations
              <span className="ml-[11px] flex gap-[2px]">
                <ClapEmoji />
                <PartyEmoji />
              </span>
            </p>
            <div className="mt-[11px] flex items-center justify-end gap-[7px] text-[20px] leading-[26px] text-[#94b5a7]">
              <time>8:24 am</time>
              <svg role="img" aria-label="Delivered" viewBox="0 0 22 12" className="h-[12px] w-[22px]" fill="none" stroke="currentColor" strokeWidth="2.300">
                <path d="M1 4.500 6.500 10 13.500 2M12 8l2.500 2.500 7-8.500" />
              </svg>
            </div>
          </article>

          <div className="mt-[4px] ml-[74px] h-[5px] overflow-hidden">
            <div className="h-[60px] rounded-[20px] bg-[#144d37]" />
          </div>
        </section>

        <button
          type="button"
          aria-label="Scroll to latest"
          className="absolute right-[22px] bottom-[126px] grid size-[56px] place-items-center rounded-full bg-[#252d33] text-[#9aa2a8] shadow-md"
        >
          <svg viewBox="0 0 20 22" className="h-[22px] w-[20px]" fill="none" stroke="currentColor" strokeWidth="2.800">
            <path d="M1 1.500l9 8.500 9-8.500M1 11.500l9 8.500 9-8.500" />
          </svg>
        </button>
        <Composer />
      </main>
      <SystemNav />
    </div>
  );
}
